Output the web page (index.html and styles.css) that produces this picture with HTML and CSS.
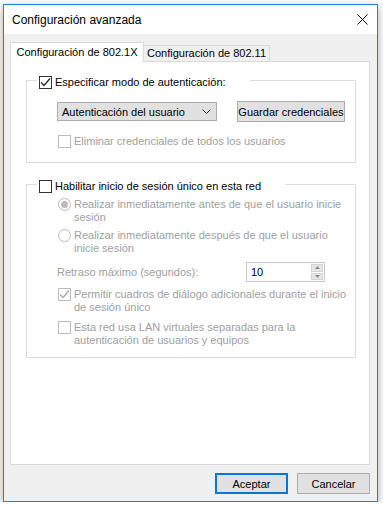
FILE: index.html
```html
<!DOCTYPE html>
<html lang="es">

<head>
  <meta charset="UTF-8">
  <title>Configuración avanzada</title>
  <link rel="stylesheet" href="styles.css">
</head>

<body>
  <div class="dialog">
    <div class="titlebar">
      <span class="title">Configuración avanzada</span>
      <svg class="close" width="11" height="11" viewBox="0 0 11 11">
        <path d="M0.5 0.5 L10.5 10.5 M10.5 0.5 L0.5 10.5" stroke="#000" stroke-width="1" fill="none" />
      </svg>
    </div>
    <div class="content">
      <div class="tabs">
        <div class="tab active">Configuración de 802.1X</div>
        <div class="tab">Configuración de 802.11</div>
      </div>
      <div class="panel">
        <fieldset class="group">
          <legend>
            <span class="box checked">
              <svg width="11" height="11" viewBox="0 0 11 11"><polyline points="1,5.5 4,8.5 10,1.5" /></svg>
            </span>
            <span>Especificar modo de autenticación:</span>
          </legend>
          <div class="group-body auth">
            <div class="controls">
              <div class="select">
                <span>Autenticación del usuario</span>
                <svg width="9" height="5" viewBox="0 0 9 5"><polyline points="0.5,0.5 4.5,4.5 8.5,0.5" /></svg>
              </div>
              <div class="btn">Guardar credenciales</div>
            </div>
            <div class="option disabled">
              <span class="box"></span>
              <span>Eliminar credenciales de todos los usuarios</span>
            </div>
          </div>
        </fieldset>

        <fieldset class="group sso">
          <legend>
            <span class="box"></span>
            <span>Habilitar inicio de sesión único en esta red</span>
          </legend>
          <div class="group-body">
            <div class="option disabled first">
              <span class="radio on"></span>
              <span>Realizar inmediatamente antes de que el usuario inicie<br>sesión</span>
            </div>
            <div class="option disabled">
              <span class="radio"></span>
              <span>Realizar inmediatamente después de que el usuario<br>inicie sesión</span>
            </div>
            <div class="delay disabled">
              <span>Retraso máximo (segundos):</span>
              <div class="spin">
                <span class="spin-value">10</span>
                <div class="spin-buttons">
                  <span class="spin-up"><svg width="5" height="3" viewBox="0 0 5 3"><polygon points="2.5,0 5,3 0,3" /></svg></span>
                  <span class="spin-down"><svg width="5" height="3" viewBox="0 0 5 3"><polygon points="0,0 5,0 2.5,3" /></svg></span>
                </div>
              </div>
            </div>
            <div class="option disabled">
              <span class="box checked">
                <svg width="11" height="11" viewBox="0 0 11 11"><polyline points="1,5.5 4,8.5 10,1.5" /></svg>
              </span>
              <span>Permitir cuadros de diálogo adicionales durante el inicio<br>de sesión único</span>
            </div>
            <div class="option disabled">
              <span class="box"></span>
              <span>Esta red usa LAN virtuales separadas para la<br>autenticación de usuarios y equipos</span>
            </div>
          </div>
        </fieldset>
      </div>
      <div class="footer">
        <div class="btn default">Aceptar</div>
        <div class="btn">Cancelar</div>
      </div>
    </div>
  </div>
</body>

</html>
```

FILE: styles.css
```css
* {
    box-sizing: border-box;
}

html,
body {
    margin: 0;
    padding: 0;
}

body {
    background-color: #fff;
    font-family: "Liberation Sans", Arial, sans-serif;
    font-size: 11px;
    color: #000;
    overflow: hidden;
    white-space: nowrap;
}

.dialog {
    display: flex;
    flex-direction: column;
    width: 375px;
    height: 498px;
    margin: 4px 0 0 3px;
    border: 1px solid #1883d7;
    background-color: #f0f0f0;
    box-shadow: 0 3px 9px rgba(0, 0, 0, 0.35);
}

.titlebar {
    display: flex;
    justify-content: space-between;
    align-items: center;
    height: 29px;
    padding: 0 9px 0 8px;
    background-color: #fff;
}

.title {
    font-size: 12px;
}

.content {
    display: flex;
    flex-direction: column;
    flex: 1;
    padding: 8px 7px 0 6px;
}

.tabs {
    display: flex;
    align-items: flex-end;
    height: 19px;
}

.tab {
    height: 16px;
    width: 127px;
    margin-left: -1px;
    border: 1px solid #d9d9d9;
    border-bottom: none;
    line-height: 15px;
    text-align: center;
}

.tab.active {
    position: relative;
    z-index: 1;
    height: 20px;
    width: 134px;
    margin: 0 0 -1px 0;
    background-color: #fff;
    line-height: 18px;
}

.panel {
    flex: 1;
    display: flex;
    flex-direction: column;
    padding: 0 13px 0 15px;
    background-color: #fff;
    border: 1px solid #d9d9d9;
}

.group {
    margin: 8px 0 0 0;
    padding: 0;
    border: 1px solid #dcdcdc;
    min-width: 0;
}

.group.sso {
    margin-top: 11px;
}

legend {
    display: flex;
    align-items: center;
    gap: 3px;
    height: 20px;
    margin-left: 10px;
    padding: 5px 24px 0 2px;
    line-height: 15px;
}

.group-body {
    display: flex;
    flex-direction: column;
    padding: 4px 10px 10px 31px;
}

.group-body.auth {
    padding-top: 11px;
    padding-bottom: 14px;
}

.controls {
    display: flex;
    align-items: center;
    gap: 20px;
    margin-left: -1px;
}

.select {
    display: flex;
    justify-content: space-between;
    align-items: center;
    width: 161px;
    height: 19px;
    padding: 0 5px 0 4px;
    background-color: #e1e1e1;
    border: 1px solid #adadad;
}

.select svg polyline {
    fill: none;
    stroke: #333;
    stroke-width: 1;
}

.btn {
    display: flex;
    justify-content: center;
    align-items: center;
    height: 21px;
    width: 109px;
    background-color: #e1e1e1;
    border: 1px solid #adadad;
}

.box {
    display: inline-flex;
    justify-content: center;
    align-items: center;
    flex: none;
    width: 13px;
    height: 13px;
    background-color: #fff;
    border: 1px solid #333;
}

.box svg polyline {
    fill: none;
    stroke: #222;
    stroke-width: 1.2;
}

.radio {
    display: inline-flex;
    justify-content: center;
    align-items: center;
    flex: none;
    width: 13px;
    height: 13px;
    border: 1px solid #bcbcbc;
    border-radius: 50%;
    background-color: #fff;
}

.radio.on::after {
    content: "";
    width: 7px;
    height: 7px;
    border-radius: 50%;
    background-color: #bcbcbc;
}

.option {
    display: flex;
    align-items: flex-start;
    gap: 3px;
    line-height: 13px;
    margin-top: 5px;
}

.auth .option {
    margin-top: 13px;
}

.option.first {
    margin-top: 0;
}

.disabled {
    color: #a0a0a0;
}

.disabled .box {
    border-color: #bcbcbc;
}

.disabled .box svg polyline {
    stroke: #a8a8a8;
}

.delay {
    display: flex;
    justify-content: space-between;
    align-items: center;
    margin: 7px 20px 6px -1px;
}

.spin {
    display: flex;
    justify-content: space-between;
    width: 79px;
    height: 20px;
    border: 1px solid #c8c8c8;
    background-color: #fff;
    color: #000;
}

.spin-value {
    padding-left: 4px;
    line-height: 18px;
}

.spin-buttons {
    display: flex;
    flex-direction: column;
    gap: 1px;
    width: 13px;
    padding: 1px 1px 1px 0;
}

.spin-buttons span {
    display: flex;
    justify-content: center;
    align-items: center;
    flex: 1;
    background-color: #e6e6e6;
    border: 1px solid #d4d4d4;
}

.spin-buttons polygon {
    fill: #8a8a8a;
}

.delay + .option {
    margin-top: 0;
}

.option + .option:last-child {
    margin-top: 7px;
}

.footer {
    display: flex;
    justify-content: flex-end;
    gap: 9px;
    height: 36px;
    padding-top: 8px;
}

.footer .btn {
    width: 73px;
}

.footer .btn.default {
    border: 2px solid #0078d7;
}
```
